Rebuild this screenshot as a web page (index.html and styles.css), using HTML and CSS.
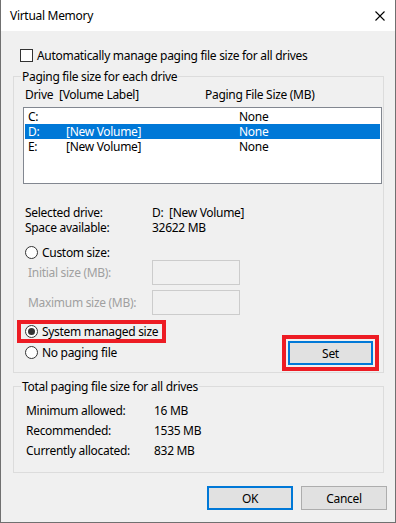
FILE: index.html
```html
<!DOCTYPE html>
<html>
<head>
<meta charset="utf-8">
<link rel="stylesheet" href="styles.css">
</head>
<body>
<div class="window">
  <div class="titlebar">
    <span class="title">Virtual Memory</span>
    <span class="close"><svg width="10" height="10" viewBox="0 0 10 10"><path d="M0.5 0.5 L9.5 9.5 M9.5 0.5 L0.5 9.5" stroke="#000" stroke-width="1.1" fill="none"/></svg></span>
  </div>
  <div class="content">
    <div class="check-row"><span class="checkbox"></span><span>Automatically manage paging file size for all drives</span></div>

    <fieldset class="group group-drives">
      <legend>Paging file size for each drive</legend>
      <div class="list-header"><span>Drive</span><span>[Volume Label]</span><span>Paging File Size (MB)</span></div>
      <div class="listbox">
        <div class="lrow"><span>C:</span><span></span><span>None</span></div>
        <div class="lrow selected"><span>D:</span><span>[New Volume]</span><span>None</span></div>
        <div class="lrow"><span>E:</span><span>[New Volume]</span><span>None</span></div>
      </div>
      <div class="info">
        <span>Selected drive:</span><span>D:&nbsp; [New Volume]</span>
        <span>Space available:</span><span>32622 MB</span>
      </div>
      <div class="radio-row custom"><span class="radio"></span><span>Custom size:</span></div>
      <div class="size-row first"><span>Initial size (MB):</span><span class="textbox"></span></div>
      <div class="size-row"><span>Maximum size (MB):</span><span class="textbox"></span></div>
      <div class="bottom-row">
        <div class="radios">
          <div class="radio-row marked"><span class="radio checked"></span><span>System managed size</span></div>
          <div class="radio-row"><span class="radio"></span><span>No paging file</span></div>
        </div>
        <button class="btn btn-focus btn-set">Set</button>
      </div>
    </fieldset>

    <fieldset class="group group-total">
      <legend>Total paging file size for all drives</legend>
      <div class="totals">
        <span>Minimum allowed:</span><span>16 MB</span>
        <span>Recommended:</span><span>1535 MB</span>
        <span>Currently allocated:</span><span>832 MB</span>
      </div>
    </fieldset>

    <div class="actions">
      <button class="btn btn-focus">OK</button>
      <button class="btn">Cancel</button>
    </div>
  </div>
</div>
</body>
</html>
```

FILE: styles.css
```css
* { box-sizing: border-box; }
html, body { margin: 0; padding: 0; }
body {
  width: 396px;
  height: 523px;
  background: #9a9a9a;
  font-family: "Noto Sans", "Liberation Sans", sans-serif;
  font-size: 12px;
  letter-spacing: -0.3px;
  line-height: 15px;
  color: #000;
  overflow: hidden;
}
.window {
  width: 396px;
  height: 523px;
  background: #f0f0f0;
  border: 1px solid #707070;
  border-top: none;
  display: flex;
  flex-direction: column;
}
.titlebar {
  height: 31px;
  background: #fff;
  display: flex;
  align-items: center;
  padding-left: 9px;
  padding-right: 10px;
}
.title { font-size: 12px; }
.close { margin-left: auto; display: flex; }
.content {
  padding-left: 12px;
  display: flex;
  flex-direction: column;
}
.check-row {
  margin-top: 17px;
  margin-left: 7px;
  height: 15px;
  display: flex;
  align-items: center;
  gap: 4px;
}
.checkbox {
  width: 13px;
  height: 13px;
  border: 1px solid #333;
  background: #fff;
  flex: none;
}
.group {
  margin: 0;
  padding: 0;
  width: 371px;
  min-width: 0;
  border: 1px solid #dcdcdc;
}
.group legend {
  padding: 0 1px;
  margin-left: 7px;
  line-height: 15px;
}
.group-drives { margin-top: 6px; padding-bottom: 7px; }
.list-header {
  margin-top: 3px;
  padding-left: 11px;
  display: grid;
  grid-template-columns: 34px 146px auto;
  height: 15px;
}
.listbox {
  margin-top: 5px;
  margin-left: 9px;
  width: 359px;
  height: 77px;
  border: 1px solid #828790;
  background: #fff;
  padding: 1px;
}
.lrow {
  height: 15px;
  padding-left: 3px;
  display: grid;
  grid-template-columns: 38px 173px auto;
}
.lrow.selected { background: #0078d7; color: #fff; }
.info {
  margin-top: 21px;
  padding-left: 11px;
  display: grid;
  grid-template-columns: 127px auto;
  grid-auto-rows: 15px;
}
.radio-row {
  height: 15px;
  display: flex;
  align-items: center;
  gap: 4px;
}
.radio-row.custom { margin-top: 10px; padding-left: 11px; }
.radio {
  width: 13px;
  height: 13px;
  border: 1px solid #333;
  border-radius: 50%;
  background: #fff;
  flex: none;
  display: flex;
  align-items: center;
  justify-content: center;
}
.radio.checked::after {
  content: "";
  width: 7px;
  height: 7px;
  border-radius: 50%;
  background: #333;
}
.size-row {
  margin-top: 5px;
  padding-left: 14px;
  display: grid;
  grid-template-columns: 124px 88px;
  align-items: center;
  color: #a0a0a0;
}
.size-row.first { margin-top: 0; }
.textbox {
  height: 25px;
  border: 1px solid #cccccc;
  background: #f0f0f0;
}
.bottom-row {
  margin-top: 9px;
  display: flex;
  align-items: flex-start;
}
.radios {
  margin-left: 7px;
  display: flex;
  flex-direction: column;
  gap: 6px;
}
.radios .radio-row { padding: 0 4px; }
.radio-row.marked { outline: 4px solid #ed1c24; }
.btn {
  font: inherit;
  letter-spacing: inherit;
  color: #000;
  background: #e1e1e1;
  border: 1px solid #adadad;
  width: 86px;
  height: 24px;
  padding: 0;
  margin: 0;
}
.btn-focus { border: 2px solid #0078d7; }
.btn-set {
  width: 85px;
  margin-left: auto;
  margin-right: 10px;
  margin-top: 17px;
  outline: 4px solid #ed1c24;
  outline-offset: 2px;
}
.group-total { margin-top: 6px; padding-bottom: 14px; }
.totals {
  margin-top: 9px;
  padding-left: 12px;
  display: grid;
  grid-template-columns: 128px auto;
  grid-auto-rows: 15px;
  row-gap: 5px;
}
.actions {
  margin-top: 13px;
  display: flex;
  justify-content: flex-end;
  gap: 8px;
  padding-right: 8px;
}
```
